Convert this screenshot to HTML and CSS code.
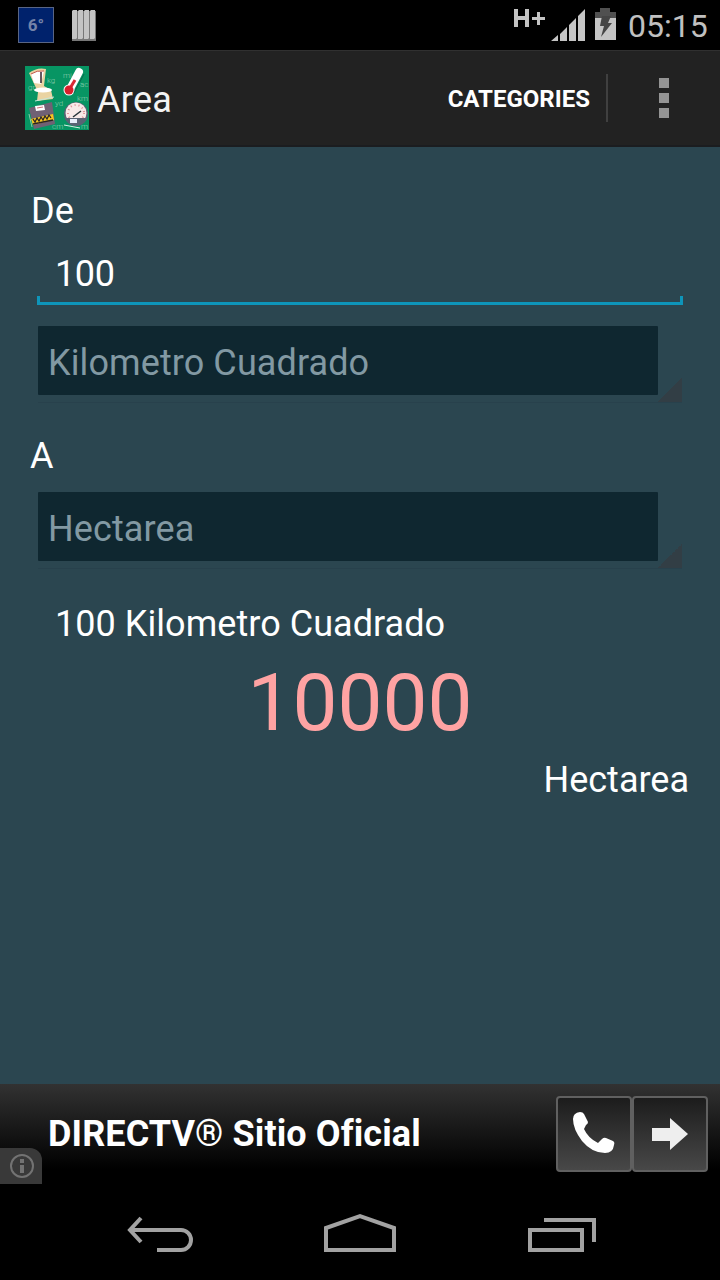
FILE: index.html
```html
<!doctype html>
<html lang="es">
<head>
	<meta charset="UTF-8">
	<title>Area</title>
	<link rel="stylesheet" href="styles.css">
</head>
<body>
<div class="screen">
	<div class="status">
		<div class="temp">6°</div>
		<svg class="bars" width="24" height="31" viewBox="0 0 24 31">
			<path fill="#777" d="M0 1h24v30H0z"/>
			<path fill="#c4c4c4" d="M0 1l1-1h4v28l-1 1H0zM6 1l1-1h4v28l-1 1H6zM12 1l1-1h4v28l-1 1h-4zM18 1l1-1h4v28l-1 1h-4z"/>
		</svg>
		<svg class="signal" width="104" height="36" viewBox="0 0 104 36">
			<path fill="#c4c4c4" d="M1 4h4v7h7V4h4v18h-4v-7H5v7H1zM19 12h5V7h3v5h5v3h-5v5h-3v-5h-5z"/>
			<path fill="#c4c4c4" d="M38 36l7-6v6zM47 29l7-7v14h-7zM56 20l7-7v23h-7zM65 11l7-7v32h-7z"/>
			<path fill="#505050" d="M82 7h5V3h10v4h6v6H82z"/>
			<path fill="#c4c4c4" d="M82 13h21v22H82z"/>
			<path fill="#454545" d="M89 11h9l-3 7h4L88 32l3-11h-4z"/>
		</svg>
		<div class="clock">05:15</div>
	</div>

	<div class="actionbar">
		<svg class="logo" width="64" height="64" viewBox="0 0 64 64">
			<path fill="#079563" d="M0 0h64v64H0z"/>
			<!-- balanza -->
			<path fill="#ead3a2" d="M4 7Q12 1 21 3l-2 17 7 4 2 9-16 2 1-9-2-4z"/>
			<path fill="#fff" d="M6 8q6-4 13-3l-3 13-7-1z"/>
			<path fill="none" stroke="#c55348" d="M6 8q6-4 13-3"/>
			<path stroke="#33202a" stroke-width="1.5" d="M16 6v11"/>
			<ellipse cx="18" cy="24" rx="9" ry="2.5" fill="#fff"/>
			<path stroke="#c6e7d8" d="M10 35l19-4"/>
			<!-- termometro -->
			<path stroke="#fff" stroke-width="8" stroke-linecap="round" d="M54 6L45 23"/>
			<circle cx="44" cy="24" r="5.5" fill="#fff"/>
			<path stroke="#d82b35" stroke-width="3" d="M50 14l-6 10"/>
			<circle cx="44" cy="24" r="4.5" fill="#d8202c"/>
			<path stroke="#07694d" d="M59 8L49 27"/>
			<!-- cinta -->
			<path fill="#706174" d="M4 42l23-6 3 22-21 5z"/>
			<path fill="#fff" d="M10 40l9-1 1 5-9 1z"/>
			<path stroke="#d06d75" d="M12 42l6-1"/>
			<path fill="#f3c51f" d="M6 53l22-5 1 6-21 5z"/>
			<path fill="none" stroke="#292426" stroke-width="1.3" d="M8 53l2 3 2-4 2 3 2-4 2 3 2-4 2 3 2-4 2 3M8 58l20-4"/>
			<path stroke="#8acbaa" d="M4 48l3 13"/>
			<!-- bascula -->
			<circle cx="51" cy="48" r="12" fill="#596374"/>
			<circle cx="51" cy="47" r="10.5" fill="#f7e9e8"/>
			<circle cx="51" cy="47" r="8" fill="none" stroke="#dc8d94" stroke-width="2" stroke-dasharray="1 3"/>
			<path fill="#596374" d="M41 52h20q-3 8-10 8t-10-8z"/>
			<path stroke="#263238" stroke-width="1.5" d="M48 51l8-6"/>
			<path fill="#e7ecfa" d="M45 53h7v4h-7z"/>
			<path stroke="#d9f1e6" d="M39 59l16 3"/>
			<g class="units">
				<text x="3" y="24">gr</text>
				<text x="22" y="17">kg</text>
				<text x="38" y="12">mi</text>
				<text x="55" y="21">ac</text>
				<text x="52" y="35">km</text>
				<text x="30" y="40">yd</text>
				<text x="27" y="63">cm</text>
				<text x="56" y="63">m</text>
			</g>
		</svg>
		<h1>Area</h1>
		<div class="categories">CATEGORIES</div>
		<div class="menu"><i></i><i></i><i></i></div>
	</div>

	<div class="content">
		<div class="label">De</div>
		<div class="input">100</div>
		<div class="spinner"><div class="value">Kilometro Cuadrado</div></div>
		<div class="label label-to">A</div>
		<div class="spinner"><div class="value">Hectarea</div></div>
		<div class="from">100 Kilometro Cuadrado</div>
		<div class="result">10000</div>
		<div class="to">Hectarea</div>
	</div>

	<div class="ad">
		<div class="ad-text">DIRECTV® Sitio Oficial</div>
		<div class="ad-btn">
			<svg width="72" height="72" viewBox="0 0 72 72">
				<path fill="#fff" d="M15 21q0-6 7-7 3 0 4 2l4 8q0 2-2 3l-2 4q4 9 14 14l4-4q2-2 4-1l7 3q2 1 1 4-1 8-9 8-13 0-23-12-9-12-9-22z"/>
			</svg>
		</div>
		<div class="ad-btn">
			<svg width="72" height="72" viewBox="0 0 72 72">
				<path fill="#eee" d="M18 30h18v-10l18 16-18 16V43H18z"/>
			</svg>
		</div>
		<div class="ad-info">
			<svg width="26" height="26" viewBox="0 0 26 26">
				<circle cx="13" cy="13" r="11" fill="none" stroke="#737373" stroke-width="2"/>
				<path fill="#737373" d="M11 6h4v4h-4zM11 12h4v8h-4z"/>
			</svg>
		</div>
	</div>

	<div class="nav">
		<svg width="720" height="96" viewBox="0 0 720 96" fill="none" stroke="#a2a2a2" stroke-width="4">
			<path d="M141 34l-11 12 11 12M130 46h51a10 10 0 0 1 0 20h-24"/>
			<path d="M326 66V44l34-12 34 12v22z"/>
			<path d="M530 46h52v20h-52zM544 36h50v22"/>
		</svg>
	</div>
</div>
</body>
</html>
```
FILE: styles.css
```css
*{
	margin: 0;
	padding: 0;
	box-sizing: border-box;
}
body {
	font-family: Roboto, "Liberation Sans", sans-serif;
	background: #000;
	color: #fff;
}
svg {
	display: block;
}
.screen {
	width: 720px;
	height: 1280px;
	display: flex;
	flex-direction: column;
	overflow: hidden;
}

/* status bar */
.status {
	height: 50px;
	display: flex;
	align-items: center;
	padding: 0 12px 0 18px;
}
.temp {
	width: 36px;
	height: 36px;
	border: 1px solid #596584;
	background: #00226c;
	color: #7583a8;
	font-size: 17px;
	font-weight: bold;
	line-height: 34px;
	text-align: center;
}
.bars {
	margin-left: 18px;
}
.signal {
	margin-left: auto;
	margin-top: -4px;
}
.clock {
	width: 81px;
	margin-left: 10px;
	font-size: 32px;
	line-height: 50px;
	color: #c0c0c0;
	padding-top: 1px;
	padding-left: 1px;
}

/* action bar */
.actionbar {
	height: 97px;
	display: flex;
	align-items: center;
	padding-left: 25px;
	background: #222;
	border-top: 1px solid #303030;
	border-bottom: 2px solid #1b1d20;
}
.units {
	fill: #8accae;
	font-size: 8px;
	font-weight: 300;
}
.actionbar h1 {
	margin-left: 8px;
	font-size: 36px;
	font-weight: normal;
	letter-spacing: 0.3px;
	line-height: 48px;
	color: #f3f3f3;
	padding-top: 3px;
}
.categories {
	margin-left: auto;
	padding-right: 16px;
	height: 48px;
	border-right: 2px solid #404040;
	font-size: 24px;
	font-weight: bold;
	line-height: 51px;
}
.menu {
	width: 112px;
	display: flex;
	flex-direction: column;
	align-items: center;
	gap: 5px;
}
.menu i {
	width: 10px;
	height: 10px;
	background: #949494;
}

/* converter */
.content {
	height: 937px;
	padding: 39px 30px 0;
	background: #2b4650;
	font-size: 36px;
}
.label {
	height: 50px;
	padding-left: 1px;
	line-height: 50px;
}
.label-to {
	margin-top: 27px;
	height: 62px;
	padding-left: 0;
	line-height: 52px;
}
.input {
	height: 69px;
	margin: 0 7px 21px;
	padding-left: 18px;
	letter-spacing: -0.4px;
	line-height: 77px;
	border-bottom: 3px solid #0e95ba;
	background: linear-gradient(#0e95ba, #0e95ba) left bottom / 3px 6px no-repeat, linear-gradient(#0e95ba, #0e95ba) right bottom / 3px 6px no-repeat;
}
.spinner {
	height: 77px;
	margin: 0 8px;
	padding-right: 24px;
	border-bottom: 1px solid #28414c;
	background: linear-gradient(135deg, transparent 50%, #323e45 50%) right bottom / 24px 24px no-repeat;
}
.value {
	height: 69px;
	padding-left: 10px;
	background: #0f2730;
	color: #8299a3;
	letter-spacing: 0.1px;
	line-height: 74px;
	border-radius: 1px;
}
.from {
	margin-top: 30px;
	padding-left: 25px;
	letter-spacing: 0.05px;
	line-height: 50px;
}
.result {
	height: 106px;
	color: #ffa3a3;
	font-size: 80px;
	line-height: 109px;
	text-align: center;
}
.to {
	padding-right: 1px;
	line-height: 50px;
	text-align: right;
}

/* banner */
.ad {
	position: relative;
	height: 100px;
	display: flex;
	align-items: center;
	padding: 0 12px 0 48px;
	background: linear-gradient(#323232, #000 85%);
}
.ad-text {
	flex: 1;
	font-size: 36px;
	font-weight: bold;
	letter-spacing: 0.1px;
}
.ad-btn {
	width: 76px;
	height: 76px;
	border: 2px solid #606060;
	border-radius: 4px;
	background: linear-gradient(#1c1c1c, #484848);
}
.ad-info {
	position: absolute;
	left: 0;
	bottom: 0;
	width: 42px;
	height: 36px;
	padding: 5px 9px;
	background: #393939;
	border-top-right-radius: 12px;
}
.nav {
	height: 96px;
	background: #000;
}
```
